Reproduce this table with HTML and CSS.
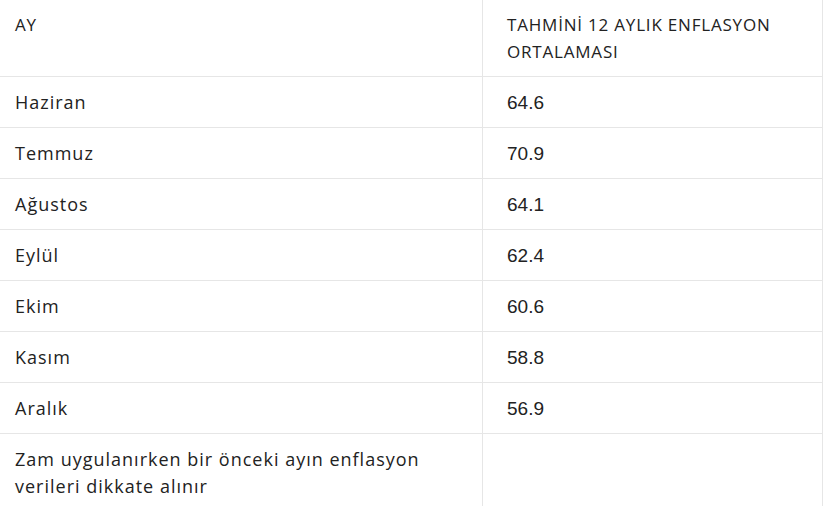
FILE: index.html
```html
<!DOCTYPE html>
<html lang="tr">
<head>
<meta charset="utf-8">
<title>Enflasyon</title>
<link rel="stylesheet" href="styles.css">
</head>
<body>
<table class="infl">
  <thead>
    <tr><th class="c-month">AY</th><th class="c-val">TAHMİNİ 12 AYLIK ENFLASYON ORTALAMASI</th></tr>
  </thead>
  <tbody>
    <tr><td class="c-month">Haziran</td><td class="c-val num">64.6</td></tr>
    <tr><td class="c-month">Temmuz</td><td class="c-val num">70.9</td></tr>
    <tr><td class="c-month">Ağustos</td><td class="c-val num">64.1</td></tr>
    <tr><td class="c-month">Eylül</td><td class="c-val num">62.4</td></tr>
    <tr><td class="c-month">Ekim</td><td class="c-val num">60.6</td></tr>
    <tr><td class="c-month">Kasım</td><td class="c-val num">58.8</td></tr>
    <tr><td class="c-month">Aralık</td><td class="c-val num">56.9</td></tr>
    <tr><td class="c-month note">Zam uygulanırken bir önceki ayın enflasyon verileri dikkate alınır</td><td class="c-val"></td></tr>
  </tbody>
</table>
</body>
</html>
```
FILE: styles.css
```css
html, body {
  margin: 0;
  padding: 0;
  background: #ffffff;
  overflow: hidden;
}

.infl {
  border-collapse: collapse;
  margin-left: -9px;
  width: 832px;
  table-layout: fixed;
  font-family: "Open Sans", "DejaVu Sans", sans-serif;
  font-size: 18px;
  letter-spacing: 1px;
  line-height: 27px;
  color: #222222;
}

.infl th,
.infl td {
  text-align: left;
  vertical-align: top;
  font-weight: 400;
  padding: 12px 24px 11px;
  border-bottom: 1px solid #e6e6e6;
  border-right: 1px solid #e6e6e6;
}

.infl th {
  padding-top: 11px;
  padding-bottom: 11px;
  font-size: 17px;
  letter-spacing: 0.8px;
}

.c-month {
  width: 443px;
}

.num {
  font-family: "Liberation Sans", Arial, sans-serif;
  font-size: 19px;
  letter-spacing: 0;
}

.note {
  padding-top: 10px;
}
```
